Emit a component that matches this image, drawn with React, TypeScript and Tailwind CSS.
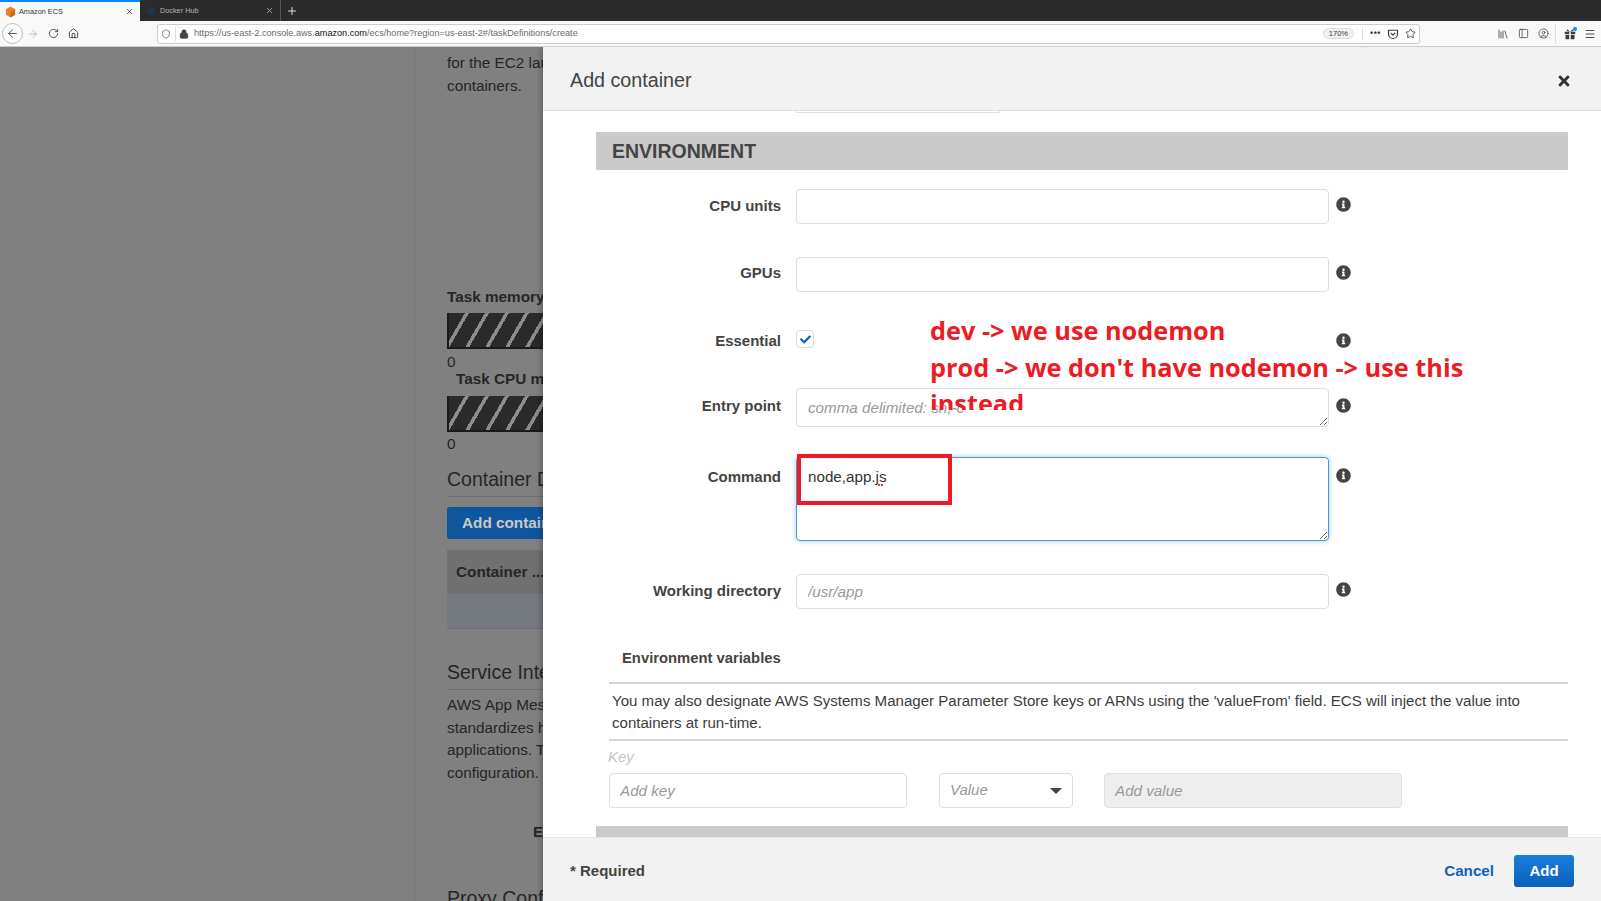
import React from "react";
import {
  ArrowLeft,
  ArrowRight,
  CircleUser,
  Home,
  Library,
  Lock,
  Menu,
  PanelLeft,
  Plus,
  RotateCw,
  Shield,
  Star,
  X,
} from "lucide-react";
import { FaCheck, FaInfoCircle, FaTimes } from "react-icons/fa";

const inputClass =
  "block w-full rounded-[4px] border border-[#dcdfdf] bg-white px-[11px] font-['Liberation_Sans',sans-serif] text-[15.2px] text-[#333] outline-none placeholder:italic placeholder:text-[#999]";

// Label on the left, control in the middle, info icon on the right
const Row = ({
  label,
  className,
  labelTop = "pt-[7px]",
  iconTop = "mt-[8px]",
  children,
}: {
  label: string;
  className: string;
  labelTop?: string;
  iconTop?: string;
  children: React.ReactNode;
}) => (
  <div className={`flex items-start ${className}`}>
    <div className={`w-[185px] text-right text-[15px] leading-[20px] font-bold text-[#444] ${labelTop}`}>
      {label}
    </div>
    <div className="ml-[15px] w-[533px]">{children}</div>
    <FaInfoCircle className={`ml-[7px] h-[15px] w-[15px] text-[#444] ${iconTop}`} />
  </div>
);

const Browser = () => (
  <>
    <div className="flex h-[21px] shrink-0 bg-[#2b2b2b] text-[7.3px] leading-[21px]">
      <div className="flex w-[140px] items-center border-t-2 border-[#0a84ff] bg-[#f9f9fa] pl-[5px] pr-[6px] text-[#333]">
        <svg viewBox="0 0 12 12" className="h-[12px] w-[11px]">
          <path d="M6 0l5 3v6l-5 3-5-3V3z" fill="#e8832a" />
          <path d="M6 6l5-3v6l-5 3z" fill="#c96a1b" />
        </svg>
        <span className="ml-[3px] flex-1">Amazon ECS</span>
        <X className="h-[9px] w-[9px]" strokeWidth={2} />
      </div>
      <div className="flex w-[141px] items-center border-r border-[#555] pl-[7px] pr-[6px] text-[#b5b5b5]">
        <div className="h-[8px] w-[8px] rounded-full bg-[#20364e]" />
        <span className="ml-[5px] flex-1">Docker Hub</span>
        <X className="h-[9px] w-[9px]" strokeWidth={2} />
      </div>
      <div className="flex items-center pl-[5px] text-[#ddd]">
        <Plus className="h-[12px] w-[12px]" strokeWidth={2} />
      </div>
    </div>

    <div className="flex h-[26px] shrink-0 items-center border-b border-[#ccc] bg-[#f9f9fa] text-[#3c3c3c]">
      <div className="ml-[2px] flex h-[21px] w-[21px] items-center justify-center rounded-full border border-[#bbb] bg-white">
        <ArrowLeft className="h-[13px] w-[13px]" strokeWidth={1.6} />
      </div>
      <ArrowRight className="ml-[4px] h-[12px] w-[12px] text-[#aaa]" strokeWidth={1.6} />
      <RotateCw className="ml-[9px] h-[11px] w-[11px]" strokeWidth={1.8} />
      <Home className="ml-[9px] h-[11px] w-[11px]" strokeWidth={2} />
      <div className="ml-[78px] flex h-[20px] w-[1263px] items-center rounded-[3px] border border-[#ccc] bg-white text-[9.14px]">
        <Shield className="ml-[3px] h-[10px] w-[10px]" strokeWidth={1.6} />
        <div className="ml-[4px] h-[14px] w-px bg-[#ddd]" />
        <Lock className="ml-[3px] h-[10px] w-[10px] fill-[#444]" strokeWidth={1.8} />
        <span className="ml-[5px] text-[#6a6a6a]">
          https://us-east-2.console.aws.<span className="text-[#111]">amazon.com</span>
          /ecs/home?region=us-east-2#/taskDefinitions/create
        </span>
        <div className="flex-1" />
        <span className="rounded-full border border-[#ddd] bg-[#f0f0f0] px-[5px] text-[7.5px] leading-[9px]">170%</span>
        <div className="ml-[8px] h-[14px] w-px bg-[#ddd]" />
        <span className="ml-[7px] text-[9px] leading-[9px] font-bold tracking-[0.5px]">•••</span>
        <svg viewBox="0 0 16 16" fill="none" stroke="currentColor" strokeWidth="1.6" className="ml-[6px] h-[12px] w-[12px]">
          <path d="M2 3h12v5a6 6 0 0 1-12 0z" />
          <path d="M5 6.5l3 3 3-3" />
        </svg>
        <Star className="ml-[6px] mr-[3px] h-[11px] w-[11px]" strokeWidth={1.8} />
      </div>
      <Library className="ml-[77px] h-[12px] w-[12px]" strokeWidth={1.6} />
      <PanelLeft className="ml-[9px] h-[11px] w-[11px]" strokeWidth={1.6} />
      <CircleUser className="ml-[9px] h-[11px] w-[11px]" strokeWidth={1.6} />
      <div className="ml-[6px] h-[20px] w-px bg-[#ddd]" />
      <div className="relative ml-[8px]">
        <svg viewBox="0 0 16 16" fill="#3c3c3c" className="h-[12px] w-[12px]">
          <rect x="1" y="5" width="6" height="3" />
          <rect x="9" y="5" width="6" height="3" />
          <rect x="2" y="9" width="5" height="6" />
          <rect x="9" y="9" width="5" height="6" />
          <path d="M8 5L4.5 1.5 3.5 4zM8 5l3.5-3.5 1 2.5z" />
        </svg>
        <div className="absolute -right-[1px] -top-[1px] h-[4px] w-[4px] rounded-full bg-[#0a84ff]" />
      </div>
      <Menu className="ml-[8px] h-[12px] w-[12px]" strokeWidth={1.8} />
    </div>
  </>
);

const StripedBar = () => (
  <div className="h-[36px] w-[160px] border-b-2 border-l-2 border-[#1a1a1a] bg-[repeating-linear-gradient(120deg,#2a2a2a_0,#2a2a2a_13.8px,#8c8c8c_13.8px,#8c8c8c_17.3px)]" />
);

// The page behind the modal, dimmed by the backdrop colours
const BackgroundPage = () => (
  <div className="h-full border-l border-[#777] ml-[414px] pl-[32px] pt-[5px] text-[15.3px] leading-[22.5px] whitespace-nowrap text-[#262626]">
    <div>for the EC2 launch type</div>
    <div>containers.</div>
    <div className="mt-[190px] leading-[20px] font-bold">Task memory</div>
    <div className="mt-[6px]"><StripedBar /></div>
    <div className="leading-[26px]">0</div>
    <div className="ml-[9px] leading-[20px] font-bold -mt-[6px]">Task CPU maximum</div>
    <div className="mt-[7px]"><StripedBar /></div>
    <div className="leading-[24px]">0</div>
    <div className="mt-[9px] w-[300px] border-b border-[#6e6e6e] pb-[3px] text-[19.5px] leading-[28px]">Container Definitions</div>
    <div className="mt-[10px] flex h-[32px] w-[200px] items-center rounded-[3px] bg-[#0f569c] pl-[15px] pt-[1px] font-bold text-[#c9c9c9]">
      Add container
    </div>
    <div className="mt-[11px] flex h-[44px] w-[300px] items-center bg-[#707070] pl-[9px] font-bold">Container ...</div>
    <div className="h-[35px] w-[300px] border-b border-[#6e6e6e] bg-[#747a80]" />
    <div className="mt-[29px] w-[300px] border-b border-[#6e6e6e] pb-[3px] text-[19.5px] leading-[28px]">Service Integration</div>
    <div className="mt-[4px] leading-[22.7px]">AWS App Mesh</div>
    <div className="leading-[22.7px]">standardizes how</div>
    <div className="leading-[22.7px]">applications. The</div>
    <div className="leading-[22.7px]">configuration.</div>
    <div className="ml-[86px] mt-[36px] font-bold">Enable</div>
    <div className="mt-[41px] text-[19.5px] leading-[28px]">Proxy Configuration</div>
  </div>
);

const App = () => {
  return (
    <div className="flex h-[901px] w-[1601px] flex-col overflow-hidden bg-[#808080] font-['Liberation_Sans',sans-serif]">
      <Browser />

      <div className="relative flex-1 overflow-hidden">
        <BackgroundPage />

        {/* Modal */}
        <div className="absolute inset-y-0 right-0 flex w-[1058px] flex-col bg-white shadow-[-2px_0_6px_rgba(0,0,0,0.25)]">
          <div className="flex h-[64px] shrink-0 items-center justify-between border-b border-[#e2e2e2] bg-[#f2f2f2] pl-[27px] pr-[29px] pt-[5px] text-[19.7px] text-[#444]">
            <span>Add container</span>
            <FaTimes className="h-[16px] w-[16px] text-[#333]" />
          </div>

          <div className="relative flex-1 overflow-hidden pl-[53px] pr-[33px]">
            <div className="ml-[200px] h-[2px] w-[204px] rounded-b-[3px] border-x border-b border-[#ddd]" />

            <div className="mt-[19px] flex h-[38px] items-center bg-[#cacaca] pl-[16px] pt-[1px] text-[19.5px] font-bold text-[#444]">
              ENVIRONMENT
            </div>

            <Row label="CPU units" className="mt-[19px]">
              <input className={`${inputClass} h-[35px]`} />
            </Row>
            <Row label="GPUs" className="mt-[33px]" labelTop="pt-[6px]">
              <input className={`${inputClass} h-[35px]`} />
            </Row>
            <Row label="Essential" className="mt-[33px] h-[31px]" labelTop="pt-[6px]">
              <div className="mt-[5px] flex h-[18px] w-[18px] items-center justify-center rounded-[4px] border border-[#d5dbdb] bg-white">
                <FaCheck className="h-[11px] w-[11px] text-[#0f62b8]" />
              </div>
            </Row>
            <Row label="Entry point" className="mt-[32px]" labelTop="pt-[8px]" iconTop="mt-[10px]">
              <textarea placeholder="comma delimited: sh,-c" className={`${inputClass} h-[39px] pt-[9px] leading-[20px]`} />
            </Row>
            <Row label="Command" className="mt-[30px]" labelTop="pt-[10px]" iconTop="mt-[11px]">
              <div className="relative">
                <textarea
                  defaultValue="node,app.js"
                  spellCheck={false}
                  className={`${inputClass} h-[84px] border-[#4f94d8]! pt-[9px] leading-[20px] shadow-[0_0_5px_rgba(50,130,210,0.45)]`}
                />
                <div className="absolute left-[82px] top-[27px] flex gap-[1px]">
                  <div className="h-[2px] w-[2px] bg-[#e03030]" />
                  <div className="h-[2px] w-[2px] bg-[#e03030]" />
                </div>
              </div>
            </Row>
            <Row label="Working directory" className="mt-[33px]">
              <input placeholder="/usr/app" className={`${inputClass} h-[35px]`} />
            </Row>

            <div className="ml-[13px] mt-[39px] border-b-2 border-[#d5d5d5] pb-[14px] pl-[13px] text-[14.8px] leading-[20px] font-bold text-[#444]">
              Environment variables
            </div>
            <div className="ml-[13px] border-b-2 border-[#d5d5d5] pb-[5px] pl-[3px] pt-[6px] text-[15.07px] leading-[22px] text-[#3d3d3d]">
              You may also designate AWS Systems Manager Parameter Store keys or ARNs using the 'valueFrom' field. ECS will inject the value into containers at run-time.
            </div>
            <div className="ml-[12px] mt-[6px] text-[15px] leading-[20px] text-[#c4c4c4] italic">Key</div>
            <div className="ml-[13px] mt-[6px] flex">
              <input placeholder="Add key" className={`${inputClass} h-[35px] w-[298px]! px-[10px]!`} />
              <div className="ml-[32px] flex h-[35px] w-[134px] items-center justify-between rounded-[4px] border border-[#dcdfdf] pl-[10px] pr-[10px] text-[15px] text-[#999] italic">
                Value
                <div className="h-0 w-0 border-x-[6px] border-t-[6px] border-x-transparent border-t-[#444]" />
              </div>
              <input placeholder="Add value" disabled className={`${inputClass} ml-[31px] h-[35px] w-[298px]! bg-[#eeeeee]! px-[10px]!`} />
            </div>
            <div className="mt-[18px] h-[12px] bg-[#cacaca]" />

            {/* Red annotation painted over the form */}
            <div className="absolute left-[387px] top-[201px] h-[98px] w-[600px] overflow-hidden text-[25.3px] leading-[36.5px] font-bold text-[#ed1c24] font-['Open_Sans',sans-serif]">
              <div>dev -&gt; we use nodemon</div>
              <div>prod -&gt; we don't have nodemon -&gt; use this</div>
              <div>instead</div>
            </div>
            <div className="absolute left-[254px] top-[343px] h-[51px] w-[155px] border-4 border-[#ed1c24]" />
          </div>

          <div className="flex h-[64px] shrink-0 items-center border-t border-[#e2e2e2] bg-[#f2f2f2] pl-[27px] pr-[27px] pt-[3px] text-[15px] font-bold">
            <span className="text-[#444]">* Required</span>
            <div className="flex-1" />
            <span className="text-[15.2px] text-[#0f62b8]">Cancel</span>
            <div className="ml-[20px] flex h-[32px] w-[60px] items-center justify-center rounded-[3px] bg-linear-to-b from-[#1a7ee0] to-[#0b5fb8] text-white">
              Add
            </div>
          </div>
        </div>
      </div>
    </div>
  );
};

export default App;
